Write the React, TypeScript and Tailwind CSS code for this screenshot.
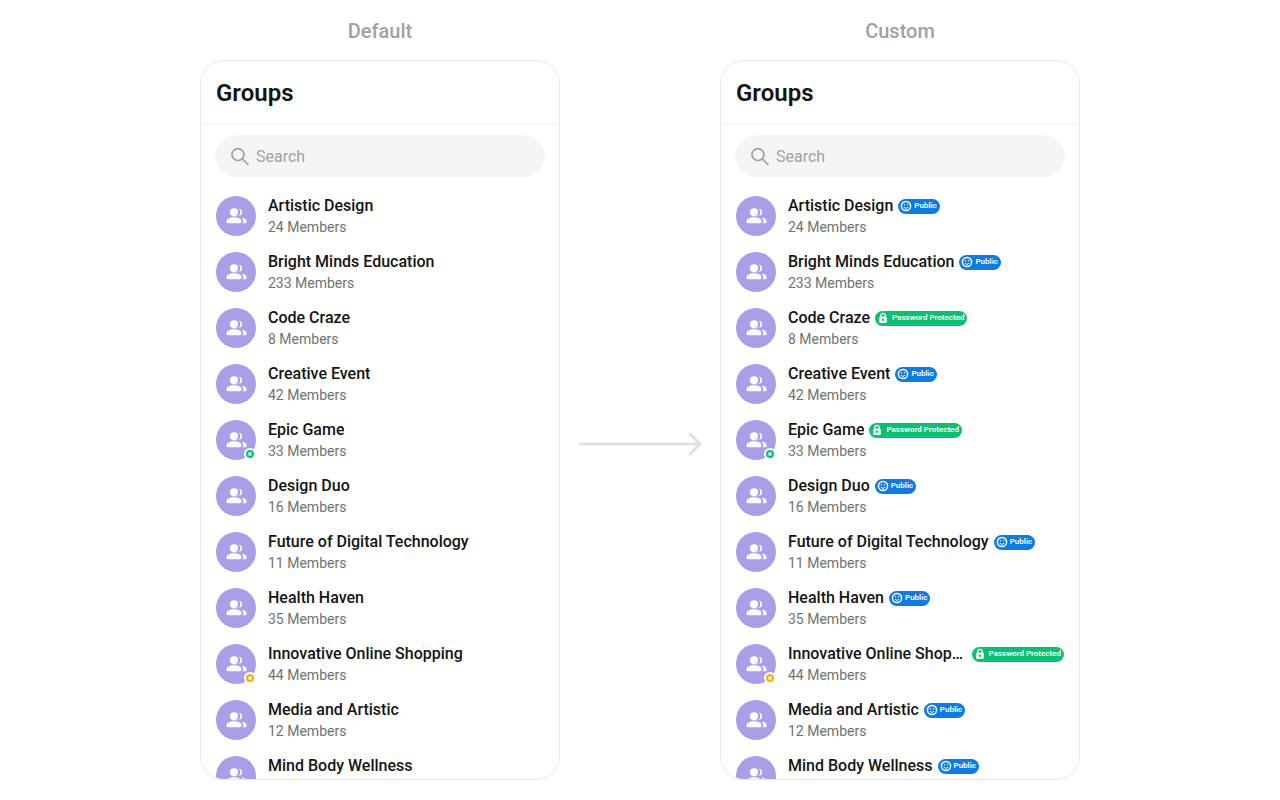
type Group = {
	name: string;
	members: number;
	kind: 'public' | 'password';
	status?: 'green' | 'orange';
};

const groups: Group[] = [
	{ name: 'Artistic Design', members: 24, kind: 'public' },
	{ name: 'Bright Minds Education', members: 233, kind: 'public' },
	{ name: 'Code Craze', members: 8, kind: 'password' },
	{ name: 'Creative Event', members: 42, kind: 'public' },
	{ name: 'Epic Game', members: 33, kind: 'password', status: 'green' },
	{ name: 'Design Duo', members: 16, kind: 'public' },
	{ name: 'Future of Digital Technology', members: 11, kind: 'public' },
	{ name: 'Health Haven', members: 35, kind: 'public' },
	{ name: 'Innovative Online Shopping', members: 44, kind: 'password', status: 'orange' },
	{ name: 'Media and Artistic', members: 12, kind: 'public' },
	{ name: 'Mind Body Wellness', members: 19, kind: 'public' }
];

const GroupIcon = () => (
	<svg width="21" height="16" viewBox="0 0 21 16" fill="#fff">
		<circle cx="8" cy="4.300" r="4.100" />
		<path d="M12.800.4c2 .4 3.300 1.900 3.300 3.900s-1.300 3.500-3.300 3.900c1-1 1.500-2.400 1.500-3.900s-.5-2.900-1.500-3.900z" />
		<path d="M.4 13.600c0-2.700 3.300-4.300 7.600-4.300s7.600 1.600 7.600 4.300c0 1-.6 1.600-1.500 1.600H1.900c-.9 0-1.500-.6-1.500-1.600z" />
		<path d="M15.500 9.500c3 .4 5.200 1.800 5.200 4 0 1-.6 1.700-1.500 1.700h-2.200c.3-.5.400-1 .4-1.600 0-1.600-.7-3-1.900-4.100z" />
	</svg>
);

const SearchIcon = () => (
	<svg width="20" height="20" viewBox="0 0 20 20" fill="none" stroke="#a1a1a1" strokeWidth="1.750" strokeLinecap="round" className="shrink-0">
		<circle cx="8" cy="8.500" r="6" />
		<path d="M12.500 13l5.500 5.500" />
	</svg>
);

const Badge = ({ kind }: { kind: Group['kind'] }) => {
	if (kind === 'public') {
		return (
			<span className="flex h-[15px] shrink-0 items-center gap-[2px] rounded-full bg-[#0b7bea] pl-[2px] pr-[3px] text-[8px] font-semibold text-white">
				<svg width="12" height="12" viewBox="0 0 12 12" fill="none" stroke="#fff" strokeWidth="1.500">
					<circle cx="6" cy="6" r="4.600" />
					<path d="M3.900 7c.5.900 1.200 1.300 2.100 1.300S7.600 7.900 8.100 7" strokeWidth="1" />
					<circle cx="4.500" cy="4.800" r=".5" fill="#fff" strokeWidth=".4" />
					<circle cx="7.500" cy="4.800" r=".5" fill="#fff" strokeWidth=".4" />
				</svg>
				Public
			</span>
		);
	}
	return (
		<span className="flex h-[15px] shrink-0 items-center gap-[3px] rounded-full bg-[#09c26f] pl-[2px] pr-[3px] text-[8px] font-semibold text-white">
			<svg width="12" height="12" viewBox="0 0 12 12" fill="none">
				<path d="M3.800 5.500V3.500C3.800 2.200 4.700 1.300 6 1.300s2.200.9 2.200 2.200v2" stroke="#fff" strokeWidth="1.200" />
				<rect x="2.200" y="4.600" width="7.600" height="6.400" rx="1.200" fill="#fff" />
				<rect x="4.900" y="6.600" width="2.200" height="2.400" rx="1" fill="#09c26f" />
			</svg>
			Password Protected
		</span>
	);
};

const GroupRow = ({ group, custom }: { group: Group; custom: boolean }) => (
	<div className="flex h-14 shrink-0 items-center gap-3 px-4">
		<div className="relative flex size-10 shrink-0 items-center justify-center rounded-full bg-[#aa9ee8]">
			<GroupIcon />
			{group.status && (
				<span className="absolute right-0 bottom-0 flex size-3 items-center justify-center rounded-full bg-white">
					<span
						className={`size-2 rounded-full border-2 ${group.status === 'green' ? 'border-[#09c26f] bg-[#bdf0d8]' : 'border-[#ffab00] bg-[#fff0cc]'}`}></span>
				</span>
			)}
		</div>
		<div className="min-w-0 flex-1">
			<div className="flex items-center gap-[5px]">
				<span className="min-w-0 truncate text-base leading-[22px] font-medium text-[#141414]">
					{group.name}
				</span>
				{custom && <Badge kind={group.kind} />}
			</div>
			<p className="text-sm leading-5 text-[#727272]">{group.members} Members</p>
		</div>
	</div>
);

const Panel = ({ title, custom }: { title: string; custom: boolean }) => (
	<div className="flex w-[360px] flex-col">
		<p className="flex h-[60px] items-center justify-center pt-[1px] text-xl font-medium text-[#a1a1a1]">
			{title}
		</p>
		<div className="flex h-[720px] flex-col overflow-hidden rounded-[24px] border border-[#e8e8e8] bg-white">
			<h2 className="flex h-[63px] shrink-0 items-center border-b border-[#f2f2f2] px-[15px] pt-[1px] text-2xl leading-8 font-semibold text-[#141414]">
				Groups
			</h2>
			<div className="mx-[14px] mt-[11px] mb-[11px] flex h-[42px] shrink-0 items-center gap-[6px] rounded-full bg-[#f5f5f5] px-[15px] text-base text-[#a1a1a1]">
				<SearchIcon />
				<span className="pt-[2px]">Search</span>
			</div>
			<div className="-mx-px flex flex-col">
				{groups.map(group => (
					<GroupRow key={group.name} group={group} custom={custom} />
				))}
			</div>
		</div>
	</div>
);

const App = () => {
	return (
		<div className="flex h-[800px] w-[1280px] justify-center overflow-hidden bg-white font-['Roboto',sans-serif]">
			<Panel title="Default" custom={false} />
			<div className="flex w-[160px] items-center justify-center pt-[88px]">
				<svg width="126" height="24" viewBox="0 0 126 24" fill="none" stroke="#e2e2e2" strokeWidth="3" strokeLinecap="round">
					<path d="M3 12h119" />
					<path d="M113 2l10 10-10 10" />
				</svg>
			</div>
			<Panel title="Custom" custom />
		</div>
	);
};

export default App;
